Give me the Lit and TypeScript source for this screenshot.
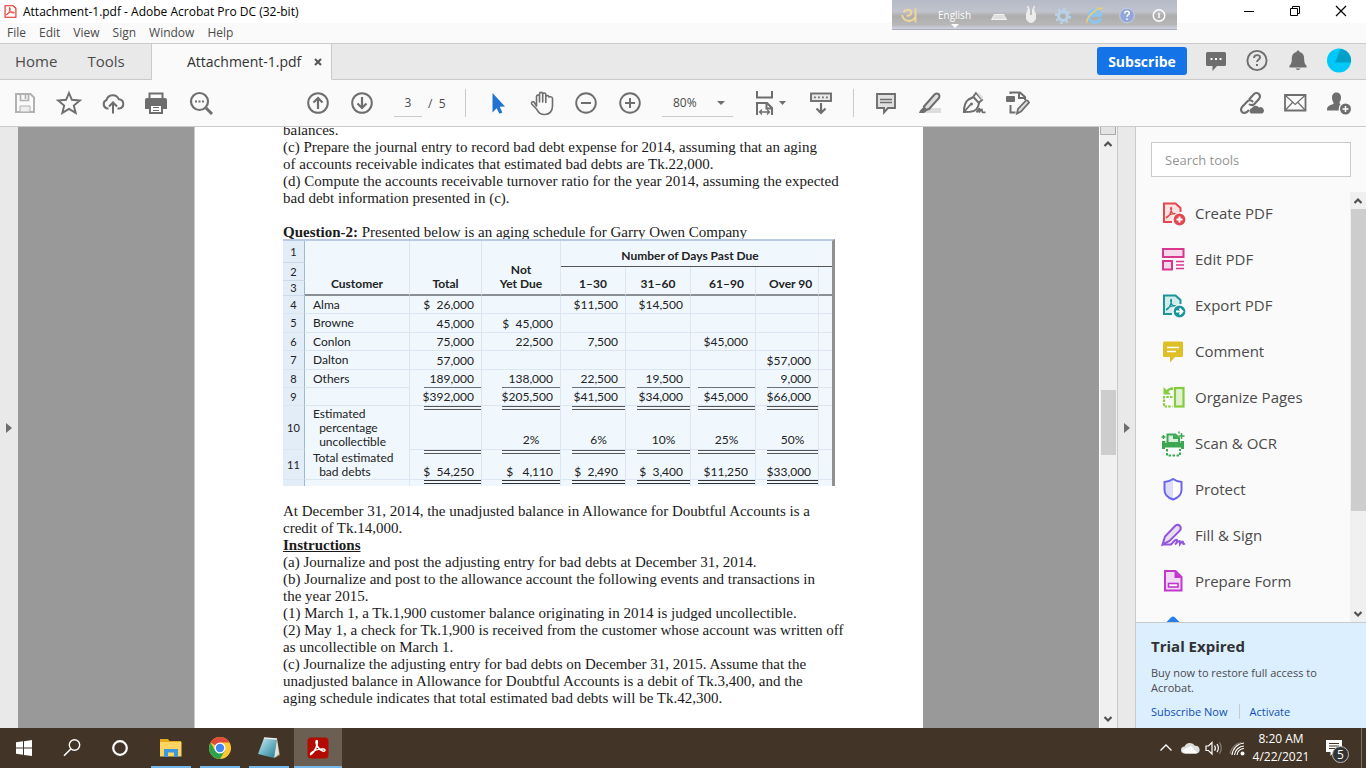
import { LitElement, html, svg, css } from "lit";
import { customElement } from "lit/decorators.js";
import { classMap } from "lit/directives/class-map.js";

const G = "#6e6e6e";

const acro = svg`<path d="M5 18.5c2.600-2 5.200-6.500 6.200-10.500c.6-2.600-.2-4.200-.9-3.200c-1.100 2 1.700 8.700 6.400 10.200c2.600.8 3.300-1.400.9-1.900c-3.600-.6-9 .9-12 3.400c-1.400 1.400-1.200 2.600-.6 2z" fill="none" stroke="currentColor" stroke-width="1.500"/>`;

const icons: Record<string, unknown> = {
  save: svg`<path d="M3 3h14.500L21 6.500V21H3z" fill="none" stroke="#b1b1b1" stroke-width="2"/><path d="M7.500 3v6.500h8V3M12.500 4v4" fill="none" stroke="#b1b1b1" stroke-width="1.700"/><path d="M7 21v-6h10v6z" fill="#eee" stroke="#b1b1b1"/>`,
  star: svg`<path d="M12 2l2.900 6.800 8 .7-6.100 5 1.900 7.400-6.700-4-6.700 4 1.900-7.400-6.100-5 8-.7z" fill="none" stroke=${G} stroke-width="1.900"/>`,
  cloud: svg`<path d="M7.500 17.500H6A4.500 4.500 0 0 1 5.500 9a6.500 6.500 0 0 1 12.300-.8a4.700 4.700 0 0 1 .7 9.300h-2" fill="none" stroke=${G} stroke-width="2"/><path d="M12 22.500V12M8 15.500l4-4 4 4" fill="none" stroke=${G} stroke-width="2"/>`,
  print: svg`<path d="M4.500 7V2.500h13V7" fill="none" stroke=${G} stroke-width="2"/><path d="M2 7h18a2 2 0 0 1 2 2v9h-4v-4H4v4H0V9a2 2 0 0 1 2-2z" fill=${G}/><path d="M5 14h12v8H5z" fill="#fff" stroke=${G} stroke-width="2"/><path d="M8 16.500h6M8 19.500h6" stroke=${G}/>`,
  find: svg`<circle cx="10.500" cy="10.500" r="8.500" fill="none" stroke=${G} stroke-width="2.200"/><path d="M17 17l6 6" stroke=${G} stroke-width="3"/><path d="M6 9.500h2v2H6zM9.500 9.500h2v2h-2zM13 9.500h2v2h-2z" fill=${G}/>`,
  up: svg`<circle cx="12" cy="12" r="9.800" fill="none" stroke=${G} stroke-width="2"/><path d="M12 18V7M7.500 11.500L12 7l4.500 4.500" fill="none" stroke=${G} stroke-width="2.200"/>`,
  down: svg`<circle cx="12" cy="12" r="9.800" fill="none" stroke=${G} stroke-width="2"/><path d="M12 6v11M7.500 12.500L12 17l4.500-4.500" fill="none" stroke=${G} stroke-width="2.200"/>`,
  pointer: svg`<path d="M6.500 2v19.500l4.200-4.300 2.700 5.500 3-1.300-2.700-5.700 5.300-.3z" fill="#2074d0"/>`,
  hand: svg`<path d="M6.500 15V5.500a1.500 1.500 0 0 1 3 0V11V3a1.600 1.600 0 0 1 3.200 0v8V3.500a1.500 1.500 0 0 1 3.100 0V11.500V6a1.500 1.500 0 0 1 3 0c0 0 3.500-1 3.700 1.500V15c0 5-3 8.500-7.500 8.500c-5 0-6.500-2-8.500-5.500L1.700 13c-1-2 1.300-3 2.500-1.700z" fill="none" stroke=${G} stroke-width="1.600" stroke-linejoin="round"/>`,
  minus: svg`<circle cx="12" cy="12" r="9.800" fill="none" stroke=${G} stroke-width="1.900"/><path d="M7 12h10" stroke=${G} stroke-width="2"/>`,
  plus: svg`<circle cx="12" cy="12" r="9.800" fill="none" stroke=${G} stroke-width="1.900"/><path d="M7 12h10M12 7v10" stroke=${G} stroke-width="2"/>`,
  fit: svg`<path d="M1 0v6.500h15V0" fill="none" stroke=${G} stroke-width="2"/><path d="M1 24V12h10l5 5v7M10.500 12v5.500H16" fill="none" stroke=${G} stroke-width="2"/><path d="M4 21h9M6 18.500L3.500 21 6 23.500M11 18.500l2.500 2.500-2.500 2.500" fill="none" stroke=${G} stroke-width="1.300"/><path d="M23 10h7l-3.500 4z" fill=${G}/>`,
  modes: svg`<rect x="2" y="2.500" width="20" height="7.500" fill="#e9e9e9" stroke=${G} stroke-width="1.900"/><path d="M5 5.500h1.800v1.800H5zM9 5.500h1.800v1.800H9zM13 5.500h1.800v1.800H13zM17 5.500h1.800v1.800H17z" fill=${G}/><path d="M12 12v9.500M7.500 17.500l4.500 4.500 4.500-4.500" fill="none" stroke=${G} stroke-width="2.200"/>`,
  note: svg`<path d="M3 3h18v14h-7l-4 4.500V17H3z" fill="#e0e0e0" stroke=${G} stroke-width="1.900"/><path d="M6 8.500h12M6 11.500h12" stroke=${G} stroke-width="1.300"/>`,
  marker: svg`<path d="M9 17h14v5H4z" fill="#dcdcdc"/><path d="M6 15.500L16.500 3.500q2.500-2 4.500 0q1 1.500 0 3.500L11 18l-4 1z" fill="#dedede" stroke=${G} stroke-width="2.100"/><path d="M5.500 16l4 3.500L6 22H1l1-2.500z" fill=${G}/>`,
  pen: svg`<path d="M2 21c0-6 1-10 4.500-12.500l5-2.500 5.500 6c-.5 5-4 8.500-9 8.800z" fill="none" stroke=${G} stroke-width="2.100"/><path d="M2 21l6.500-7.500M11 6l3-4 6 7-3.500 3" fill="none" stroke=${G} stroke-width="1.900"/><path d="M14 1l6 8 1-3-4-4z" fill="#ddd"/><circle cx="9.500" cy="13" r="1.500" fill=${G}/><path d="M14.500 21.500q3-5 3-3.500t-.5 3.500q3-4.500 3-2.500t.5 2.300h3" fill="none" stroke=${G} stroke-width="1.800"/>`,
  editpdf: svg`<path d="M4.500 3V1.500h9.500l5 4.500v3M13 2v5h6M4.500 14v7.500h5" fill="none" stroke=${G} stroke-width="2"/><rect x="0" y="5" width="9" height="6" rx="1" fill=${G}/><path d="M11 22.500l1-4.500 8-8.500q2-.5 3 2l-8 9z" fill="#ddd" stroke=${G} stroke-width="1.800"/>`,
  link: svg`<g fill="none" stroke=${G} stroke-width="2.100"><path d="M10 8.500l5-5.500q2.500-2 5 0q2 2.200 0 5L15 13.500q-2.500 1.500-5-.5"/><path d="M14 11q-2.500-3-5.500-.8L3 16q-2 2.800 0 5q2 1.800 5 0l2-2"/></g><path d="M12 22.500a3 3 0 0 1 1-5.500a4 4 0 0 1 7-.5a3 3 0 0 1 3 6z" fill=${G}/>`,
  mail: svg`<path d="M2 4h20.500v15.500H2z" fill="none" stroke=${G} stroke-width="1.800"/><path d="M2.500 4.500l9.700 9 9.700-9M2.500 19l7-7.500M22 19l-7-7.500" fill="none" stroke=${G} stroke-width="1.200"/>`,
  adduser: svg`<path d="M9.500 1.500c3.300 0 4.700 2.500 4.500 5.500c0 2-1 3-1.500 4.500c0 1.500 1 2 3 2.500v5.500H0C0 15 2 14.500 6.500 13c.5-1.500-1.500-3-1.500-6c-.2-3 1.200-5.500 4.500-5.500z" fill=${G}/><circle cx="18.500" cy="18" r="6.200" fill=${G} stroke="#fafafa" stroke-width="1.400"/><path d="M15.500 18h6M18.500 15v6" stroke="#fff" stroke-width="1.500"/>`,
  chat: svg`<path d="M3.500 3h17a1.500 1.500 0 0 1 1.500 1.500v11a1.500 1.500 0 0 1-1.500 1.500H13l-4.500 5V17h-5A1.500 1.500 0 0 1 2 15.500v-11A1.500 1.500 0 0 1 3.500 3z" fill=${G}/><path d="M6.500 9h2v2h-2zM11 9h2v2h-2zM15.500 9h2v2h-2z" fill="#fff"/>`,
  help: svg`<circle cx="12" cy="11.500" r="9.600" fill="none" stroke=${G} stroke-width="1.900"/><path d="M9 9c0-4 6-3.500 6-.5c0 2-3 2.300-3 4.500" fill="none" stroke=${G} stroke-width="1.900"/><path d="M11 15h2v2h-2z" fill=${G}/>`,
  bell: svg`<path d="M12 1.500c1 0 1.500.5 1.500 1.500c4 1 4.700 4 4.700 7.500c0 3.500 1 5 2.300 6v2h-17v-2c1.300-1 2.300-2.500 2.300-6c0-3.500.7-6.500 4.700-7.500c0-1 .5-1.500 1.500-1.500zM9.500 19.500h5q-2.500 3-5 0z" fill=${G}/>`,
  avatar: svg`<circle cx="12" cy="11.500" r="12" fill="#00c8fa"/><path d="M13.500 0A12 12 0 0 1 24 13.500H8z" fill="#00a0c8"/>`,
  create: svg`<path d="M3 2h12l5 5v14H3z" fill="#fbe3e4"/><path d="M11 21H3V2.500h11.500L19.500 7v4" fill="none" stroke="#e34850" stroke-width="2"/><g color="#e34850" transform="translate(2 3) scale(.75)">${acro}</g><circle cx="18.500" cy="18.500" r="6.500" fill="#e34850" stroke="#fafafa" stroke-width="1.200"/><path d="M15.500 18.500h6M18.500 15.500v6" stroke="#fff" stroke-width="2"/>`,
  exportpdf: svg`<path d="M3 2h12l5 5v14H3z" fill="#d5eced"/><path d="M11 21H3V2.500h11.500L19.500 7v4" fill="none" stroke="#1b959a" stroke-width="2"/><g color="#1b959a" transform="translate(2 3) scale(.75)">${acro}</g><circle cx="18.500" cy="18.500" r="6.500" fill="#1b959a" stroke="#fafafa" stroke-width="1.200"/><path d="M15 18.500h6M18.500 15.500l3 3-3 3" fill="none" stroke="#fff" stroke-width="1.800"/>`,
  edit: svg`<rect x="2" y="2" width="20.500" height="8" fill="#f6d8ea" stroke="#d83790" stroke-width="2"/><rect x="2" y="14" width="9" height="8.500" fill="#f6d8ea" stroke="#d83790" stroke-width="2"/><path d="M15 14.500h8M15 18h8M15 21.500h8" stroke="#d83790" stroke-width="1.300"/>`,
  comment: svg`<path d="M3.500 2.500h17A1.500 1.500 0 0 1 22 4v12.500a1.500 1.500 0 0 1-1.500 1.500H14l-5 5.500V18H3.500A1.500 1.500 0 0 1 2 16.500V4a1.500 1.500 0 0 1 1.500-1.500z" fill="#dfbf28"/><path d="M6 8.500h12M6 12.500h9" stroke="#fff" stroke-width="1.600"/>`,
  organize: svg`<rect x="14" y="3" width="8.500" height="18.500" fill="#e0f2cf" stroke="#85cd3e" stroke-width="2.200"/><path d="M11.500 12H3v9.500h8.500" fill="none" stroke="#85cd3e" stroke-width="2.200" stroke-dasharray="2.500 1.200"/><path d="M12 3.500q-4 0-6 3" fill="none" stroke="#85cd3e" stroke-width="2.400"/><path d="M2.500 2v7.500H10z" fill="#85cd3e"/>`,
  scan: svg`<path d="M6.500 12V3.500h8L18 7v5z" fill="#d9efdd" stroke="#3ea753" stroke-width="2"/><path d="M12 3l6 5h-6z" fill="#3ea753"/><path d="M1 10h3.500v2h15v-2H23v8h-3v-1.500H4V18H1z" fill="#3ea753"/><path d="M6 18v6.500h13V18" fill="none" stroke="#3ea753" stroke-width="2" stroke-dasharray="2.500 1.500"/><path d="M20.500 2v6M17.500 5h6M2.500 4v4M.5 6h4M18 .5v2" stroke="#3ea753" stroke-width="1.500"/>`,
  protect: svg`<path d="M12 2q4.500 3 9 3v8c0 5-4.500 8.500-9 10c-4.500-1.500-9-5-9-10V5q4.500 0 9-3z" fill="#fff"/><path d="M12 2v21c-4.500-1.500-9-5-9-10V5q4.500 0 9-3z" fill="#dedcf8"/><path d="M12 2q4.500 3 8.500 3v8c0 5-4 8-8.500 9.500c-4.500-1.500-8.500-4.500-8.500-9.500V5q4 0 8.500-3z" fill="none" stroke="#6767ec" stroke-width="2"/>`,
  sign: svg`<path d="M1.500 21.500l2.500-8L14.500 2.500q2.500-1.500 4.500.5q1.500 2 0 4.500L8.500 18z" fill="#eadcf5" stroke="#9256d9" stroke-width="2"/><path d="M1 21.500h9q5-6 6-4.500t-2 4.500q5-5 5-3t0 2.500q3-4 3-1.500t2 1" fill="none" stroke="#9256d9" stroke-width="2"/>`,
  form: svg`<path d="M4 2h10.500L20.500 8v13.500H4z" fill="#f3d9f5" stroke="#c038cc" stroke-width="2"/><path d="M13.500 2v7h7z" fill="#c038cc"/><rect x="7.500" y="14.500" width="9.500" height="3.500" fill="#fff" stroke="#c038cc" stroke-width="1.600"/>`,
  share: svg`<path d="M12 1.500q1 0 2 1l8 8q1 1 0 2L12 22 2 12.500q-1-1 0-2l8-8q1-1 2-1z" fill="#2680eb"/>`,
  chevup: svg`<path d="M8.500 14l3.500-3.500 3.500 3.500" fill="none" stroke="#505050" stroke-width="2.200"/>`,
  chevdown: svg`<path d="M8.500 10l3.500 3.500 3.500-3.500" fill="none" stroke="#505050" stroke-width="2.200"/>`,
  min: svg`<path d="M7 11.500h10" stroke="#000"/>`,
  max: svg`<path d="M7.500 8.500h7v7h-7zM9.500 8V6.500h7v7H15" fill="none" stroke="#000"/>`,
  close: svg`<path d="M7 6l10 10M17 6L7 16" stroke="#000" stroke-width="1.200"/>`,
  tabclose: svg`<path d="M9 9l6 6M15 9l-6 6" stroke="#555" stroke-width="2"/>`,
  windows: svg`<path d="M4 6.300l7-1v6.300H4zM12 5.200l8-1.200v7.600h-8zM4 12.500h7v6.300l-7-1zM12 12.500h8V20l-8-1.100z" fill="#fff"/>`,
  wsearch: svg`<circle cx="14.500" cy="9" r="5.200" fill="none" stroke="#fff" stroke-width="1.400"/><path d="M10.800 13L4 19.800" stroke="#fff" stroke-width="1.600"/>`,
  cortana: svg`<circle cx="12" cy="12" r="6.800" fill="none" stroke="#fff" stroke-width="2.200"/>`,
  explorer: svg`<path d="M1 3h8l1.500 2H22v15H1z" fill="#e9a91c"/><path d="M1 6h21.500v14.500H1z" fill="#ffd461"/><path d="M5 21v-8h14v8h-4v-4.500H9V21z" fill="#3d97dd"/>`,
  chrome: svg`<circle cx="12" cy="12" r="11" fill="#fcc934"/><path d="M12 12L2.500 6.500A11 11 0 0 1 21.500 6.500H12z" fill="#e04a3c"/><path d="M2.500 6.500A11 11 0 0 0 12 23l4.800-8.300L7.200 14.700z" fill="#2ba24c"/><circle cx="12" cy="12" r="5.500" fill="#fff"/><circle cx="12" cy="12" r="4.200" fill="#4285f4"/>`,
  notepad: svg`<defs><linearGradient id="np" x1="0" y1="0" x2="1" y2="1"><stop offset="0" stop-color="#d5eef2"/><stop offset=".5" stop-color="#6fb6c6"/><stop offset="1" stop-color="#237a92"/></linearGradient></defs><path d="M20 3l3 16-5 3z" fill="#a58a55"/><path d="M7 2l13 1-3 19-16-4z" fill="url(#np)"/><path d="M20 3l2 15-5 4z" fill="#dde6e6"/><path d="M7 2l13 1" stroke="#eee" stroke-width="1.500"/>`,
  acrobat: svg`<rect x="1.500" y="1.500" width="21" height="21" rx="3.500" fill="#b30b00"/><g color="#fff">${acro}</g>`,
  acrotitle: svg`<path d="M2 1.500h15L22 6v16.500H2z" fill="#fff" stroke="#e2231a" stroke-width="2"/><g color="#e2231a" stroke-width="2">${acro}</g>`,
  traychev: svg`<path d="M6.500 14.500L12 9l5.500 5.500" fill="none" stroke="#fff" stroke-width="1.300"/>`,
  onedrive: svg`<path d="M8 17.500H6.500a3.500 3.500 0 0 1 0-7a6 6 0 0 1 10.500-.7a4 4 0 0 1 2 7.700z" fill="#ddd"/><path d="M4 14l9-4 6 6.500-1 1H7z" fill="#fff"/>`,
  speaker: svg`<path d="M4 10v4.500h2.500L10 18V6.500L6.500 10z" fill="none" stroke="#fff" stroke-width="1.200"/><path d="M12.500 9.500q1.800 2.700 0 5.200M15 8q2.800 4.200 0 8.200" fill="none" stroke="#fff" stroke-width="1.200"/><path d="M17.500 6.500q3.500 5.700 0 11.200" fill="none" stroke="#8b8279" stroke-width="1.200"/>`,
  wifi: svg`<g fill="none" stroke="#fff" stroke-width="1.100"><path d="M6 19a13 13 0 0 1 12-12"/><path d="M8.500 19a10 10 0 0 1 9.500-9"/><path d="M11 19a7 7 0 0 1 7-6.500"/><path d="M4 17.500a15 15 0 0 1 11-11" stroke="#8b8279"/></g><circle cx="16.500" cy="17.500" r="2" fill="#fff"/>`,
  bubble: svg`<path d="M4 4h16v12h-8l-3.500 4v-4H4z" fill="#fff"/><path d="M7 7.500h10M7 10h10M7 12.500h7" stroke="#423426"/>`,
  bangla: svg`<path d="M5.500 9.500q2-3.500 6-2.500q2.500 1 1.500 4q-1.500 2.500-4.500 1.500M4 12q1.500 5.500 6.500 6q4.500 0 7-4M17.500 5.500v14" fill="none" stroke="#f0d79c" stroke-width="1.900"/>`,
  keyboard: svg`<path d="M7 11h10l3 6H4z" fill="#f2f2f2"/><path d="M6.500 13h11M6 15h12" stroke="#cacaca"/>`,
  mouse: svg`<path d="M9 6h6l2 5v5q-5 8-10 0v-5z" fill="#ececec"/><path d="M12 12V6" stroke="#8d8d8d"/><path d="M8.500 3l1.500 4M15.500 3l-1.500 4" stroke="#eee" stroke-width="1.500"/>`,
  gear: svg`<circle cx="12" cy="13" r="4.500" fill="none" stroke="#b9d2e8" stroke-width="3"/><circle cx="12" cy="13" r="7" fill="none" stroke="#b9d2e8" stroke-width="2.200" stroke-dasharray="2.750 2.750"/>`,
  ie: svg`<path d="M17.500 15.500a6 6 0 1 1 .3-3.200H7" fill="none" stroke="#8cc6ee" stroke-width="3"/><path d="M4 20c-2-4 9-16 15.500-14.500" fill="none" stroke="#ecd073" stroke-width="1.500"/>`,
  langhelp: svg`<circle cx="12" cy="12.500" r="7.300" fill="#93a6da" stroke="#c9d0e6"/><path d="M9.700 10.500c0-3 4.600-2.700 4.600-.3c0 1.500-2.300 1.700-2.300 3.600" fill="none" stroke="#fff" stroke-width="1.500"/><path d="M11.200 15.500h1.600v1.600h-1.600z" fill="#fff"/>`,
  power: svg`<circle cx="12" cy="12.500" r="5.800" fill="none" stroke="#fff" stroke-width="1.400"/><path d="M12 10v5" stroke="#fff" stroke-width="1.400"/>`,
};

const icon = (name: string, size = 24) =>
  name === "fit"
    ? html`<svg width="32" height="24" viewBox="0 0 32 24" aria-hidden="true">${icons.fit}</svg>`
    : html`<svg width=${size} height=${size} viewBox="0 0 24 24" aria-hidden="true">${icons[name]}</svg>`;

const base = css`
  * { box-sizing: border-box; }
  button { border: 0; background: none; padding: 0; margin: 0; font: inherit; color: inherit; display: flex; align-items: center; justify-content: center; flex: none; }
  svg { display: block; flex: none; overflow: visible; }
  a { text-decoration: none; color: inherit; }
`;

@customElement("app-header")
class AppHeader extends LitElement {
  static styles = [base, css`
    :host { display: block; flex: none; color: #4b4b4b; }
    .title { display: flex; align-items: center; height: 23px; background: #fff; color: #000; font-size: 12px; padding: 0 5px 0 4px; gap: 6px; position: relative; }
    .title h1 { font-size: 12px; font-weight: 400; margin: 0; flex: 1; }
    .title .win { width: 40px; height: 22px; }
    .menu { display: flex; gap: 13px; height: 20px; align-items: center; padding: 0 7px 2px; background: #fafafa; font-size: 12px; }
    .tabs { display: flex; height: 37px; border-top: 1px solid #cacaca; background: #e9e9e9; font-size: 15px; }
    .tabs > * { border-bottom: 1px solid #cacaca; }
    .home { display: flex; align-items: center; gap: 30px; padding: 0 0 2px 15px; width: 152px; border-right: 1px solid #cacaca; }
    .doc { display: flex; align-items: center; width: 180px; padding-left: 35px; background: #fafafa; border-right: 1px solid #cacaca; border-bottom-color: #fafafa; font-size: 14px; color: #323232; }
    .doc span { width: 119px; }
    .right { flex: 1; display: flex; align-items: center; justify-content: flex-end; padding: 0 7px 1px 0; }
    .right .ib { width: 41px; }
    .subscribe { width: 90px; height: 28px; border-radius: 3px; background: #1473e6; color: #fff; font-weight: 700; font-size: 14px; margin-right: 8px; }
    .lang { position: absolute; top: 0; right: 189px; width: 285px; height: 30px; display: flex; align-items: center; background: linear-gradient(#b5bac7 0, #c0c3cc 40%, #adadad 55%, #b7b7b8 85%, #cfd3e4); border-bottom: 1px solid #a9abb5; color: #fff; font-size: 10px; padding-left: 2px; }
    .lang .k { width: 32px; height: 28px; }
    .lang .en { width: 57px; height: 28px; padding-top: 5px; flex-direction: column; line-height: 18px; }
    .lang .en i { border: 4px solid transparent; border-top-color: #fff; border-bottom: 0; }
  `];
  render() {
    return html`
      <div class="title">
        ${icon("acrotitle", 13)}
        <h1>Attachment-1.pdf - Adobe Acrobat Pro DC (32-bit)</h1>
        <button class="win" aria-label="Minimize">${icon("min")}</button>
        <button class="win" aria-label="Restore">${icon("max")}</button>
        <button class="win" aria-label="Close">${icon("close")}</button>
        <div class="lang">
          <button class="k" aria-label="Layout">${icon("bangla")}</button>
          <button class="en">English<i></i></button>
          ${["keyboard", "mouse", "gear", "ie", "langhelp", "power"].map((n) => html`<button class="k" aria-label=${n}>${icon(n)}</button>`)}
        </div>
      </div>
      <nav class="menu">${["File", "Edit", "View", "Sign", "Window", "Help"].map((m) => html`<button>${m}</button>`)}</nav>
      <div class="tabs">
        <div class="home"><button>Home</button><button>Tools</button></div>
        <div class="doc"><span>Attachment-1.pdf</span><button aria-label="Close tab">${icon("tabclose")}</button></div>
        <div class="right">
          <button class="subscribe">Subscribe</button>
          ${["chat", "help", "bell", "avatar"].map((n) => html`<button class="ib" aria-label=${n}>${icon(n)}</button>`)}
        </div>
      </div>`;
  }
}

@customElement("app-toolbar")
class AppToolbar extends LitElement {
  static styles = [base, css`
    :host { display: flex; flex: none; align-items: center; height: 47px; padding: 0 5px 0 3px; background: #fafafa; border-bottom: 1px solid #cacaca; color: #4b4b4b; font-size: 12px; }
    .tb { width: 44px; height: 44px; }
    .wide { width: 66px; padding-left: 12px; }
    .group { display: flex; align-items: center; }
    .nav { margin-left: 73px; }
    input { width: 28px; height: 28px; margin-left: 10px; border: 0; border-bottom: 1px solid #cacaca; background: none; text-align: center; font: inherit; color: inherit; padding: 0; outline: 0; }
    .of { padding-left: 6px; width: 43px; white-space: pre; }
    .sep { width: 1px; height: 28px; background: #cacaca; margin-right: 10px; }
    .zoom { position: relative; margin-left: 10px; width: 71px; }
    select { appearance: none; width: 100%; height: 28px; border: 0; border-bottom: 1px solid #cacaca; border-radius: 0; background: none; font: inherit; color: inherit; padding: 0 0 0 11px; outline: 0; }
    .zoom i { position: absolute; right: 8px; top: 12px; border: 4px solid transparent; border-top-color: #6e6e6e; border-bottom: 0; pointer-events: none; }
    .sep.two { margin-left: 10px; }
    .end { margin-left: auto; }
  `];
  btn(n: string, wide = false) {
    return html`<button class=${classMap({ tb: true, wide })} aria-label=${n}>${icon(n)}</button>`;
  }
  render() {
    return html`
      <div class="group">${["save", "star", "cloud", "print", "find"].map((n) => this.btn(n))}</div>
      <div class="group nav">
        ${this.btn("up")}${this.btn("down")}
        <input aria-label="Page number" .value=${"3"} /><span class="of">/  5</span>
      </div>
      <div class="sep"></div>
      <div class="group">
        ${["pointer", "hand", "minus", "plus"].map((n) => this.btn(n))}
        <div class="zoom"><select aria-label="Zoom"><option>80%</option></select><i></i></div>
        ${this.btn("fit", true)}${this.btn("modes")}
      </div>
      <div class="sep two"></div>
      <div class="group">${["note", "marker", "pen", "editpdf"].map((n) => this.btn(n))}</div>
      <div class="group end">${["link", "mail", "adduser"].map((n) => this.btn(n))}</div>`;
  }
}

const BEFORE = [
  "balances.",
  "(c) Prepare the journal entry to record bad debt expense for 2014, assuming that an aging",
  "of accounts receivable indicates that estimated bad debts are Tk.22,000.",
  "(d) Compute the accounts receivable turnover ratio for the year 2014, assuming the expected",
  "bad debt information presented in (c).",
];
const AFTER = [
  "(a) Journalize and post the adjusting entry for bad debts at December 31, 2014.",
  "(b) Journalize and post to the allowance account the following events and transactions in",
  "the year 2015.",
  "(1) March 1, a Tk.1,900 customer balance originating in 2014 is judged uncollectible.",
  "(2) May 1, a check for Tk.1,900 is received from the customer whose account was written off",
  "as uncollectible on March 1.",
  "(c) Journalize the adjusting entry for bad debts on December 31, 2015. Assume that the",
  "unadjusted balance in Allowance for Doubtful Accounts is a debit of Tk.3,400, and the",
  "aging schedule indicates that total estimated bad debts will be Tk.42,300.",
];
const ROWS: [string, string, string, string[]][] = [
  ["4", "Alma", "", ["$  26,000", "", "$11,500", "$14,500", "", ""]],
  ["5", "Browne", "odd", ["45,000", "$  45,000", "", "", "", ""]],
  ["6", "Conlon", "", ["75,000", "22,500", "7,500", "", "$45,000", ""]],
  ["7", "Dalton", "odd", ["57,000", "", "", "", "", "$57,000"]],
  ["8", "Others", "single", ["189,000", "138,000", "22,500", "19,500", "", "9,000"]],
  ["9", "", "", ["$392,000", "$205,500", "$41,500", "$34,000", "$45,000", "$66,000"]],
  ["10", "Estimated\n  percentage\n  uncollectible", "tall", ["", "2%", "6%", "10%", "25%", "50%"]],
  ["11", "Total estimated\n  bad debts", "mid", ["$  54,250", "$   4,110", "$  2,490", "$  3,400", "$11,250", "$33,000"]],
  ["", "", "last", ["", "", "", "", "", ""]],
];

@customElement("pdf-page")
class PdfPage extends LitElement {
  static styles = [base, css`
    :host { display: block; width: 729px; flex: none; background: #fff; border-left: 1px solid #cacaca; padding: 0 88px; color: #1a1a1a; font: 15px/17px "Liberation Serif", "Times New Roman", serif; overflow: hidden; }
    p { margin: 0; white-space: nowrap; }
    .first { margin-top: -5px; }
    .q, .after { margin-top: 17px; }
    u { font-weight: 700; }
    table { margin-top: -2px; width: 552px; position: relative; border-collapse: separate; border-spacing: 0; table-layout: fixed; background: #f0f8fe; border-top: 2px solid #b9cbe3; border-right: 3px solid #909090; font: 12px/14px Lato, "Open Sans", sans-serif; color: #222; }
    td, th { padding: 0; border-right: 1px solid #dce6f2; border-bottom: 1px solid #dce6f2; vertical-align: middle; white-space: pre; font-weight: 400; }
    td:last-child, th:last-child { border-right: 0; }
    .num, .num:last-child { background: #e3edf8; border-right: 1px solid #9db8cf; text-align: center; font-size: 11px; line-height: 12px; }
    thead th { border-bottom: 0; font-weight: 700; vertical-align: bottom; text-align: center; }
    thead .num { font-weight: 400; vertical-align: middle; border-bottom: 1px solid #cbd9e8; }
    .span { border-bottom: 1px solid #555; border-right: 0; vertical-align: middle; padding-top: 4px; }
    thead .line { border-bottom: 2px solid #8a8f94; padding-bottom: 3px; }
    thead .push { padding-left: 7px; }
    thead tr:nth-child(1) { height: 22px; }
    thead tr:nth-child(2) { height: 4px; }
    thead tr:nth-child(3) { height: 14px; }
    thead tr:nth-child(4) { height: 15px; }
    tbody tr { height: 18px; }
    tbody tr.odd { height: 19px; }
    tbody tr.tall { height: 44px; }
    tbody tr.mid { height: 30px; }
    tbody tr.last { height: 6px; }
    .name { padding-left: 8px; text-align: left; }
    .amt { padding-left: 14px; vertical-align: bottom; text-align: right; }
    .c1 { padding-left: 20px; }
    .c2, .c3, .c5 { padding-left: 11px; }
    .c4 { padding-left: 7px; }
    .amt span { display: flex; align-items: center; justify-content: flex-end; height: 17px; padding-right: 7px; }
    .single .amt { border-bottom: 0; }
    .single .amt span { height: 18px; border-bottom: 1px solid #6c737a; }
    .tall .name, .mid .name { line-height: 14px; }
    .tall .name { border-bottom: 0; }
    .tall .amt span { height: 43px; align-items: flex-end; justify-content: center; padding: 0 0 2px 0; border-top: 4px double #555; }
    .mid .amt span { height: 29px; align-items: flex-end; border-top: 4px double #555; }
    .last td { border-bottom: 0; }
    .last .amt span { height: 6px; border-top: 4px double #333; }
    .w0 { width: 22px; } .w1 { width: 105px; } .w2 { width: 72px; } .w3 { width: 79px; } .w4 { width: 65px; } .w5 { width: 63px; }
  `];
  render() {
    return html`
      ${BEFORE.map((t, i) => html`<p class=${i ? "" : "first"}>${t}</p>`)}
      <p class="q"><b>Question-2:</b> Presented below is an aging schedule for Garry Owen Company</p>
      <table>
        <colgroup><col class="w0" /><col class="w1" /><col class="w2" /><col class="w3" /><col class="w4" /><col class="w4" /><col class="w4" /><col class="w5" /><col /></colgroup>
        <thead>
          <tr><th class="num">1</th>
            <th class="line" rowspan="4">Customer</th><th class="line" rowspan="4">Total</th><th class="line" rowspan="4">Not
Yet Due</th>
            <th class="span" colspan="4" rowspan="2">Number of Days Past Due</th><th class="span" rowspan="2"></th></tr>
          <tr><th class="num" rowspan="2">2</th></tr>
          <tr>${["1–30", "31–60", "61–90", "Over 90", ""].map((t, i) => html`<th class=${classMap({ line: true, push: i > 1 })} rowspan="2">${t}</th>`)}</tr>
          <tr><th class="num">3</th></tr>
        </thead>
        <tbody>
          ${ROWS.map(([n, name, cls, amts]) => html`<tr class=${cls}>
            <td class="num">${n}</td><td class="name">${name}</td>
            ${amts.map((a, i) => html`<td class="amt c${i}"><span>${a}</span></td>`)}<td></td></tr>`)}
        </tbody>
      </table>
      <p class="after">At December 31, 2014, the unadjusted balance in Allowance for Doubtful Accounts is a</p>
      <p>credit of Tk.14,000.</p>
      <p><u>Instructions</u></p>
      ${AFTER.map((t) => html`<p>${t}</p>`)}`;
  }
}

const TOOLS = [
  ["create", "Create PDF"], ["edit", "Edit PDF"], ["exportpdf", "Export PDF"], ["comment", "Comment"],
  ["organize", "Organize Pages"], ["scan", "Scan & OCR"], ["protect", "Protect"], ["sign", "Fill & Sign"],
  ["form", "Prepare Form"], ["share", "Share"],
];

@customElement("tools-panel")
class ToolsPanel extends LitElement {
  static styles = [base, css`
    :host { display: flex; flex-direction: column; flex: none; width: 231px; min-height: 0; background: #fafafa; border-left: 1px solid #cacaca; color: #4b4b4b; }
    .search { margin: 15px 15px 13px 15px; }
    input { display: block; width: 100%; height: 35px; border: 1px solid #cacaca; background: #fff; padding: 0 13px; font: 13px "Open Sans", sans-serif; outline: 0; }
    input::placeholder { color: #959595; }
    .body { flex: 1; display: flex; min-height: 0; }
    .list { flex: 1; overflow: hidden; }
    .list button { width: 100%; height: 46px; justify-content: flex-start; gap: 10px; padding-left: 25px; font-size: 15px; }
    .bar { width: 16px; margin-top: 2px; background: #f0f0f0; display: flex; flex-direction: column; align-items: center; justify-content: space-between; }
    .bar i { width: 15px; flex: 303; background: #cdcdcd; }
    .bar b { flex: 94; }
    .bar button { width: 16px; height: 17px; overflow: hidden; }
    .trial { height: 106px; flex: none; border-top: 1px solid #cacaca; background: #dcefff; padding: 13px 15px 0; font-size: 11px; line-height: 15px; }
    h2 { margin: 0 0 9px; font-size: 15px; line-height: 20px; color: #323232; }
    .trial p { margin: 0; }
    .links { display: flex; gap: 12px; margin-top: 9px; color: #0d4fb5; }
    .links a + a { border-left: 1px solid #cacaca; padding-left: 9px; }
  `];
  render() {
    return html`
      <div class="search"><input type="text" aria-label="Search tools" placeholder="Search tools" /></div>
      <div class="body">
        <div class="list">${TOOLS.map(([i, t]) => html`<button>${icon(i)}${t}</button>`)}</div>
        <div class="bar"><button aria-label="Scroll up">${icon("chevup")}</button><i></i><b></b><button aria-label="Scroll down">${icon("chevdown")}</button></div>
      </div>
      <section class="trial">
        <h2>Trial Expired</h2>
        <p>Buy now to restore full access to Acrobat.</p>
        <div class="links"><a href="#">Subscribe Now</a><a href="#">Activate</a></div>
      </section>`;
  }
}

@customElement("task-bar")
class TaskBar extends LitElement {
  static styles = [base, css`
    :host { display: flex; flex: none; height: 40px; background: #423426; color: #fff; font-size: 12px; line-height: 18px; }
    .app { width: 48px; height: 40px; position: relative; }
    .apps { display: flex; gap: 1px; margin-left: 3px; }
    .run::after { content: ""; position: absolute; left: 4px; right: 4px; bottom: 0; height: 2px; background: #76b9ed; }
    .on { background: #6b5f54; }
    .on::after { left: 0; right: 0; }
    .tray { margin-left: auto; display: flex; padding-right: 4px; }
    .t { width: 24px; }
    .clock { width: 62px; flex-direction: column; }
    .note { width: 50px; padding-right: 6px; position: relative; border-right: 1px solid #7d736a; }
    .badge { position: absolute; left: 20px; top: 18px; width: 17px; height: 17px; border-radius: 50%; border: 1px solid #bbb; background: #333; line-height: 15px; text-align: center; font-size: 12px; }
  `];
  render() {
    return html`
      ${["windows", "wsearch", "cortana"].map((n) => html`<button class="app" aria-label=${n}>${icon(n)}</button>`)}
      <div class="apps">${["explorer", "chrome", "notepad", "acrobat"].map((n) => html`<button class=${classMap({ app: true, run: true, on: n === "acrobat" })} aria-label=${n}>${icon(n)}</button>`)}</div>
      <div class="tray">
        ${["traychev", "onedrive", "speaker", "wifi"].map((n) => html`<button class="t" aria-label=${n}>${icon(n)}</button>`)}
        <button class="clock"><span>8:20 AM</span><span>4/22/2021</span></button>
        <button class="note" aria-label="Notifications">${icon("bubble")}<span class="badge">5</span></button>
      </div>`;
  }
}

@customElement("app-root")
class AppRoot extends LitElement {
  static styles = [base, css`
    :host { display: flex; flex-direction: column; height: 100vh; overflow: hidden; font-family: "Open Sans", "Noto Sans", sans-serif; }
    .main { flex: 1; display: flex; min-height: 0; }
    .strip { width: 18px; flex: none; background: #e9e9e9; display: flex; color: #6e6e6e; }
    .strip button { width: 17px; }
    .strip i { border: 5px solid transparent; border-left: 6px solid #6e6e6e; border-right: 0; }
    .view { flex: 1; display: flex; justify-content: center; background: #999; overflow: hidden; }
    .scroll { width: 18px; flex: none; background: #f0f0f0; display: flex; flex-direction: column; align-items: center; border-left: 1px solid #fff; padding-right: 1px; }
    .split { width: 16px; height: 8px; background: #e3e3e3; border: 1px solid #aaa; border-top: 0; }
    .scroll button { width: 16px; height: 18px; overflow: hidden; }
    .a { flex: 237; } .thumb { flex: 65; width: 15px; background: #cdcdcd; } .b { flex: 255; }
    .strip.r { border-left: 1px solid #cacaca; }
  `];
  render() {
    return html`
      <app-header></app-header>
      <app-toolbar></app-toolbar>
      <div class="main">
        <div class="strip"><button aria-label="Show navigation pane"><i></i></button></div>
        <div class="view"><pdf-page></pdf-page></div>
        <div class="scroll">
          <div class="split"></div>
          <button aria-label="Scroll up">${icon("chevup")}</button>
          <div class="a"></div><div class="thumb"></div><div class="b"></div>
          <button aria-label="Scroll down">${icon("chevdown")}</button>
        </div>
        <div class="strip r"><button aria-label="Hide tools pane"><i></i></button></div>
        <tools-panel></tools-panel>
      </div>
      <task-bar></task-bar>`;
  }
}
